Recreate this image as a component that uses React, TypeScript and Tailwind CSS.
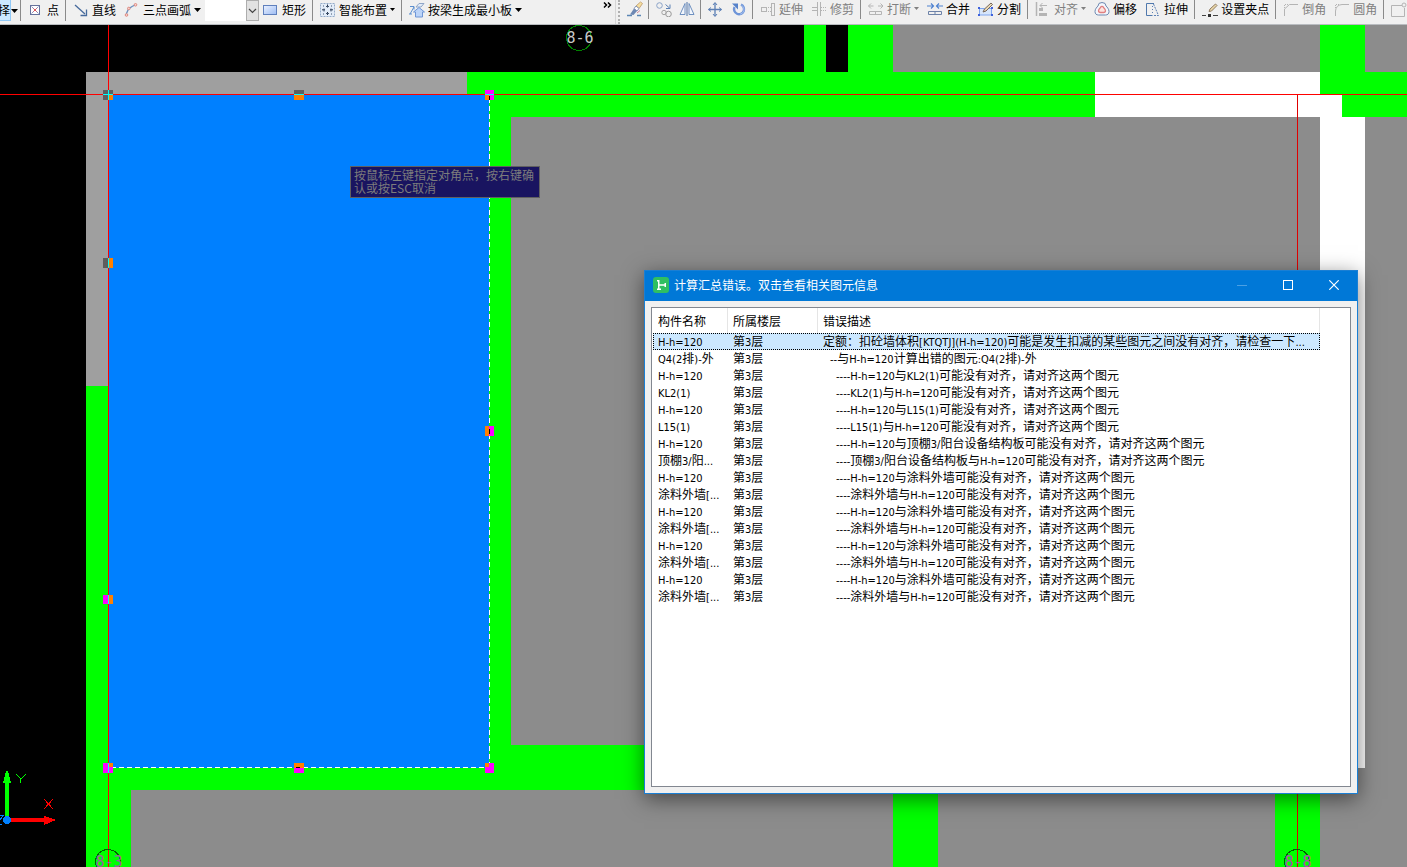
import React from "react";

const ROWS: [string, string, number][] = [
  ["H-h=120", "定额：扣砼墙体积[KTQTJ](H-h=120)可能是发生扣减的某些图元之间没有对齐，请检查一下...", 0],
  ["Q4(2排)-外", "--与H-h=120计算出错的图元:Q4(2排)-外", 1],
  ["H-h=120", "----H-h=120与KL2(1)可能没有对齐，请对齐这两个图元", 2],
  ["KL2(1)", "----KL2(1)与H-h=120可能没有对齐，请对齐这两个图元", 2],
  ["H-h=120", "----H-h=120与L15(1)可能没有对齐，请对齐这两个图元", 2],
  ["L15(1)", "----L15(1)与H-h=120可能没有对齐，请对齐这两个图元", 2],
  ["H-h=120", "----H-h=120与顶棚3/阳台设备结构板可能没有对齐，请对齐这两个图元", 2],
  ["顶棚3/阳...", "----顶棚3/阳台设备结构板与H-h=120可能没有对齐，请对齐这两个图元", 2],
  ["H-h=120", "----H-h=120与涂料外墙可能没有对齐，请对齐这两个图元", 2],
  ["涂料外墙[...", "----涂料外墙与H-h=120可能没有对齐，请对齐这两个图元", 2],
  ["H-h=120", "----H-h=120与涂料外墙可能没有对齐，请对齐这两个图元", 2],
  ["涂料外墙[...", "----涂料外墙与H-h=120可能没有对齐，请对齐这两个图元", 2],
  ["H-h=120", "----H-h=120与涂料外墙可能没有对齐，请对齐这两个图元", 2],
  ["涂料外墙[...", "----涂料外墙与H-h=120可能没有对齐，请对齐这两个图元", 2],
  ["H-h=120", "----H-h=120与涂料外墙可能没有对齐，请对齐这两个图元", 2],
  ["涂料外墙[...", "----涂料外墙与H-h=120可能没有对齐，请对齐这两个图元", 2],
];

const INDENT = ["pl-[5px]", "pl-[12px]", "pl-[18px]"];

/* Latin runs are set one size smaller than the Chinese text around them. */
function Mixed({ text }: { text: string }) {
  const parts = text.split(/([\x20-\x7e]+)/);
  return (
    <>
      {parts.map((p, i) =>
        i % 2 ? (
          <span key={i} className="font-['DejaVu_Sans_Condensed','Noto_Sans',sans-serif] text-[11px]">{p}</span>
        ) : (
          p
        ),
      )}
    </>
  );
}

function Icon({ children }: { children: React.ReactNode }) {
  return (
    <svg width="16" height="16" viewBox="0 0 16 16" fill="none" className="shrink-0" aria-hidden="true">
      {children}
    </svg>
  );
}

function Arrow({ wide }: { wide?: boolean }) {
  return wide ? (
    <svg width="7" height="4" viewBox="0 0 7 4" className="shrink-0" aria-hidden="true"><path d="M0 0h7L3.5 4z" fill="currentColor" /></svg>
  ) : (
    <svg width="5" height="3" viewBox="0 0 5 3" className="shrink-0" aria-hidden="true"><path d="M0 0h5L2.5 3z" fill="currentColor" /></svg>
  );
}

function Tool({ icon, label, arrow, disabled }: { icon: React.ReactNode; label: string; arrow?: "wide" | "small"; disabled?: boolean }) {
  return (
    <button type="button" disabled={disabled} className="flex h-full shrink-0 items-center gap-[3px] px-1 pb-[2px] whitespace-nowrap text-black disabled:text-[#808080]">
      <Icon>{icon}</Icon>
      <span>{label}</span>
      {arrow && <Arrow wide={arrow === "wide"} />}
    </button>
  );
}

function IconTool({ icon, title }: { icon: React.ReactNode; title: string }) {
  return (
    <button type="button" aria-label={title} className="flex h-full shrink-0 items-center pr-[3px] pb-[2px] pl-1">
      <Icon>{icon}</Icon>
    </button>
  );
}

function Sep() {
  return <span className="mr-[3px] ml-[2px] h-full w-px shrink-0 bg-[#8a8a8a]" />;
}

const B = "#5b7fb5";
const G = "#b4b4b4";

const icons = {
  point: (
    <>
      <rect x="2.5" y="3.5" width="9" height="9" stroke="#66729c" fill="#fff" />
      <path d="M3.500 4.500l7 7M10.500 4.500l-7 7" stroke="#8b93c4" />
      <path d="M5.500 6.500l3 3M8.500 6.500l-3 3" stroke="#e0555a" />
    </>
  ),
  line: (
    <>
      <path d="M2 3l10 9" stroke="#466a9c" strokeWidth="1.300" />
      <path d="M13.500 7.500v6h-6" stroke="#466a9c" strokeWidth="1.300" />
    </>
  ),
  arc: (
    <>
      <path d="M2.500 14V11.500L4.500 7L8 4.500L12 2.500" stroke="#6b90bf" strokeWidth="1.300" />
      <g stroke="#e08a80" fill="#f7d4cf"><circle cx="2.500" cy="13" r="1.300" /><circle cx="4.800" cy="6.500" r="1.300" /><circle cx="11.500" cy="2.800" r="1.300" /></g>
    </>
  ),
  rect: <rect x="0.500" y="3.500" width="13" height="9" fill="url(#rectFill)" stroke="#5f80bd" />,
  smart: (
    <>
      <rect x="0.500" y="1.500" width="14" height="13" stroke="#93abc9" fill="#e3edf9" strokeDasharray="2 1" />
      <path d="M7.500 2.500v3M7.500 10v3M2 7.800h3M10 7.800h3" stroke="#26364d" />
      <path d="M6 4.500h3M6 11.500h3M4 6.500v3M11 6.500v3M3 4h1M11 4h1M3 12h1M11 12h1" stroke="#40536e" />
    </>
  ),
  beam: (
    <>
      <path d="M7 5l3-3.500h5L12 5z" fill="#e3ecf8" stroke="#8fa6c8" />
      <path d="M1 4.500h4v3M0 12h3M5 5L1 12" stroke="#5b8fd0" />
      <path d="M4.500 10L10 5.500l5.500 4.500h-2v5h-7v-5z" fill="#bcd4f8" stroke="#6f96d6" />
    </>
  ),
  brush: (
    <>
      <path d="M0 14.500h5M10 14.500h4" stroke="#5b86b5" strokeWidth="1.300" />
      <path d="M9 5l4.500-4 2 1.500-3.500 5z" fill="#f5dfa0" stroke="#c8a77a" />
      <path d="M7 7.500L9 5l3 2.500-2 2.500z" fill="#fff" stroke="#8494b5" />
      <path d="M3 13.500l4-6 3 2.500L6.500 14z" fill="#6d87b3" />
      <path d="M10 12l3-2.500" stroke="#d0889a" />
    </>
  ),
  copy: (
    <>
      <circle cx="3.500" cy="4.500" r="2.800" stroke="#8aa3c8" />
      <circle cx="12.500" cy="13" r="2.800" stroke="#9b9b9b" />
      <circle cx="8" cy="11.500" r="2.200" stroke="#a4a4a4" />
      <path d="M9.500 3.500l4 3.500M14 3.500v4h-4" stroke="#5b80b4" />
    </>
  ),
  mirror: (
    <>
      <path d="M6 2.500v11H1zM10 2.500v11h5z" fill="#f2f6fc" stroke="#6e90c0" />
      <path d="M8 1v14" stroke="#4d73a8" />
    </>
  ),
  move: (
    <>
      <path d="M7 2v13M0.500 8.500h13" stroke={B} strokeWidth="1.300" />
      <path d="M5 4l2-2.500L9 4M5 13l2 2.500L9 13M3 6.500L0.500 8.500l2.500 2M11 6.500l2.500 2-2.500 2" stroke={B} />
    </>
  ),
  rotate: (
    <>
      <path d="M10 3.600a5 5 0 1 1-6.500 2.500" stroke="#6d94d8" strokeWidth="2.400" />
      <path d="M1 2.500h6v6z" fill="#5581ca" />
      <path d="M10.500 4.200a4.800 4.800 0 0 1-1.500 9" stroke="#a5c0ef" />
    </>
  ),
  extend: (
    <>
      <rect x="11.500" y="2.500" width="3" height="12" stroke={G} />
      <path d="M1 6.500h6M1 10.500h6M1.500 6.500v4M6.500 6.500v4" stroke={G} />
      <path d="M8 6.500h3M8 10.500h3" stroke={G} strokeDasharray="1 1" />
    </>
  ),
  trim: (
    <>
      <path d="M6.500 1v14M9.500 1v14M1 6.500h5M1 9.500h5" stroke={G} />
      <path d="M10 6.500h6M10 9.500h6" stroke={G} strokeDasharray="1 1" />
    </>
  ),
  breakI: (
    <>
      <path d="M0.500 5h5M10 5h5M3 2.500L.5 5L3 7.500M12.500 2.500L15 5l-2.500 2.500" stroke={G} />
      <path d="M1.500 10.500h12v3h-12zM7.500 10.500v3" stroke={G} />
    </>
  ),
  merge: (
    <>
      <path d="M0 5h6M10 5h6M4 2.500L6.500 5L4 7.500M12 2.500L9.500 5L12 7.500" stroke="#4f82d0" strokeWidth="1.200" />
      <path d="M1.500 10.500h13v3h-13zM8 10.500v3" stroke="#6d82a8" />
    </>
  ),
  split: (
    <>
      <path d="M1.500 7.500v6.500h12v-6.500z" fill="#d7e6fb" stroke="#7fa6ee" />
      <g fill="#3f62dc"><rect x="0" y="6" width="2" height="2" /><rect x="0" y="13" width="2" height="2" /><rect x="13" y="13" width="2" height="2" /><rect x="13" y="6" width="2" height="2" /></g>
      <path d="M5 11l1.500-3L13 2l1.500 1.500L8 10z" fill="#ead9b4" stroke="#75675c" />
    </>
  ),
  align: (
    <>
      <path d="M1.500 1v14" stroke={G} strokeWidth="1.500" />
      <rect x="4" y="7" width="4" height="3" fill={G} /><rect x="4" y="12" width="8" height="3" fill={G} />
      <path d="M5 4.500h7M7.500 2L5 4.500L7.500 7" stroke={G} />
    </>
  ),
  offset: (
    <>
      <path d="M4 5a4 3.500 0 0 1 8 0c1 1 3 3 3 5.500s-1.500 3.500-3.500 3.500h-7C2.500 14 1 13 1 10.500S3 6 4 5z" stroke="#6d88b0" fill="#f4f7fc" />
      <path d="M6.500 6.500a1.600 1.600 0 0 1 3 0c1 1 2 2 2 3.300s-1 1.700-2 1.700h-3c-1.200 0-2-.7-2-1.700s1-2.300 2-3.300z" stroke="#e08080" strokeWidth="1.300" fill="#fce4e0" />
    </>
  ),
  stretch: (
    <>
      <path d="M9 2.500H1.500v12h6" stroke="#4f78ad" />
      <path d="M8.500 3l5 11.500H8" stroke="#5b80b4" strokeDasharray="2 1" />
      <path d="M7.500 5v9" stroke="#5b80b4" strokeDasharray="1 2" />
    </>
  ),
  grip: (
    <>
      <path d="M0 14.500h4M11 14.500h5" stroke="#444" />
      <rect x="6" y="13" width="3" height="3" fill="#333" />
      <path d="M7 10.500l1-2.500 5.500-5 1.500 1.500-5.500 5.500z" fill="#ead8a8" stroke="#8f7a62" />
    </>
  ),
  chamfer: (
    <>
      <path d="M1.500 15V8L6.500 3.500H15" stroke={G} />
      <path d="M1.500 7V3.500H6" stroke={G} strokeDasharray="1 1" />
    </>
  ),
  fillet: (
    <>
      <path d="M1.500 15V10Q2 4 8 3.500h7" stroke={G} />
      <path d="M1.500 7V3.500H6" stroke={G} strokeDasharray="1 1" />
    </>
  ),
  box: (
    <>
      <path d="M11 4.500H.5v11h13V7" stroke={G} />
      <circle cx="13" cy="4" r="2" stroke={G} />
    </>
  ),
};

function Toolbar() {
  return (
    <header className="flex h-[25px] shrink-0 overflow-hidden border-b border-[#b9bcc0] bg-[#f0f0f0] text-[12px] leading-4">
      <svg width="0" height="0" className="absolute" aria-hidden="true">
        <defs>
          <linearGradient id="rectFill" x1="0" y1="0" x2="1" y2="1"><stop offset="0" stopColor="#eaf1ff" /><stop offset="1" stopColor="#9dbcf3" /></linearGradient>
        </defs>
      </svg>
      <div className="flex h-[21px] w-[615px] shrink-0 items-center">
        <button type="button" className="flex h-full shrink-0 items-center">
          <span className="flex h-full w-[11px] items-center justify-end overflow-hidden border-r border-b border-[#90c8f6] bg-[#cce8ff] pb-px">择</span>
          <Arrow wide />
        </button>
        <Sep />
        <Tool icon={icons.point} label="点" />
        <Sep />
        <Tool icon={icons.line} label="直线" />
        <Tool icon={icons.arc} label="三点画弧" arrow="wide" />
        <div className="relative h-full w-[54px] shrink-0">
          <select aria-label="画弧参数" className="h-full w-full appearance-none bg-white"><option></option></select>
          <span className="pointer-events-none absolute inset-y-0 right-0 flex w-[13px] items-center justify-center border border-[#adadad] bg-[#e1e1e1]">
            <svg width="9" height="6" viewBox="0 0 9 6" fill="none"><path d="M1 1l3.500 3.500L8 1" stroke="#444" strokeWidth="1.200" /></svg>
          </span>
        </div>
        <Tool icon={icons.rect} label="矩形" />
        <Sep />
        <Tool icon={icons.smart} label="智能布置" arrow="small" />
        <Sep />
        <Tool icon={icons.beam} label="按梁生成最小板" arrow="wide" />
        <button type="button" aria-label="更多" className="mr-[3px] ml-auto flex h-full items-start pt-[2px]">
          <svg width="9" height="6" viewBox="0 0 9 6" fill="none"><path d="M1 .5L3.500 3L1 5.500M5 .5L7.500 3L5 5.500" stroke="#000" strokeWidth="1.500" /></svg>
        </button>
      </div>
      <div className="flex min-w-0 flex-1 border-l border-[#d5d5d5]">
        <span className="mr-[3px] ml-[2px] w-[2px] shrink-0 border-l-2 border-dotted border-[#b0b0b0]" />
        <div className="flex h-[19px] min-w-0 flex-1 items-center overflow-hidden">
          <IconTool icon={icons.brush} title="格式刷" />
          <Sep />
          <IconTool icon={icons.copy} title="复制" />
          <IconTool icon={icons.mirror} title="镜像" />
          <Sep />
          <IconTool icon={icons.move} title="移动" />
          <IconTool icon={icons.rotate} title="旋转" />
          <Sep />
          <Tool icon={icons.extend} label="延伸" disabled />
          <Tool icon={icons.trim} label="修剪" disabled />
          <Sep />
          <Tool icon={icons.breakI} label="打断" arrow="small" disabled />
          <Tool icon={icons.merge} label="合并" />
          <Tool icon={icons.split} label="分割" />
          <Sep />
          <Tool icon={icons.align} label="对齐" arrow="small" disabled />
          <Tool icon={icons.offset} label="偏移" />
          <Tool icon={icons.stretch} label="拉伸" />
          <Sep />
          <Tool icon={icons.grip} label="设置夹点" />
          <Sep />
          <Tool icon={icons.chamfer} label="倒角" disabled />
          <Tool icon={icons.fillet} label="圆角" disabled />
          <Sep />
          <IconTool icon={icons.box} title="打断点" />
        </div>
      </div>
    </header>
  );
}

function R({ x1, y1, x2, y2, f }: { x1: number; y1: number; x2: number; y2: number; f: string }) {
  return <rect x={x1} y={y1} width={x2 - x1} height={y2 - y1} fill={f} />;
}

function AxisLabel({ cx, cy, text, fill, ring }: { cx: number; cy: number; text: string; fill: string; ring: string }) {
  return (
    <g>
      <circle cx={cx} cy={cy} r="12.500" fill="none" stroke={ring} />
      <text x={cx + 1} y={cy + 5} textAnchor="middle" fill={fill} fontSize="15" fontFamily="'DejaVu Sans Mono', monospace">{text}</text>
    </g>
  );
}

function Plan() {
  const green = "#00ff00";
  const gray = "#8c8c8c";
  const light = "#9f9f9f";
  const dark = "#5f5f5f";
  const orange = "#ff8000";
  const pink = "#ff00ff";
  return (
    <svg className="absolute inset-0 h-full w-full" shapeRendering="crispEdges" role="img" aria-label="楼层平面图">
      <g transform="translate(0 -25)">
        <rect x="86" y="72" width="100%" height="100%" fill={gray} />
        <rect x="893" y="25" width="100%" height="47" fill={gray} />
        <R x1={804} y1={25} x2={826} y2={72} f={green} />
        <R x1={848} y1={25} x2={893} y2={72} f={green} />
        <R x1={86} y1={72} x2={467} y2={95} f={light} />
        <R x1={86} y1={72} x2={108} y2={386} f={light} />
        <R x1={467} y1={72} x2={1095} y2={117} f={green} />
        <R x1={1095} y1={72} x2={1320} y2={117} f="#fff" />
        <R x1={1320} y1={95} x2={1365} y2={768} f="#fff" />
        <R x1={1320} y1={25} x2={1365} y2={94} f={green} />
        <rect x="1365" y="72" width="100%" height="45" fill={green} />
        <R x1={1342} y1={94} x2={1365} y2={117} f={green} />
        <R x1={489} y1={117} x2={511} y2={768} f={green} />
        <R x1={489} y1={745} x2={1320} y2={790} f={green} />
        <R x1={108} y1={768} x2={490} y2={790} f={green} />
        <rect x="86" y="386" width="22" height="100%" fill={green} />
        <rect x="108" y="768" width="23" height="100%" fill={green} />
        <rect x="893" y="790" width="45" height="100%" fill={green} />
        <rect x="1275" y="790" width="45" height="100%" fill={green} />
        <R x1={108} y1={95} x2={489} y2={768} f="#0080ff" />
        <path d="M489.500 98V768M111 767.500H489" stroke="#fff" strokeDasharray="5 3" />
        <rect x="0" y="94" width="100%" height="1" fill="#f00" />
        <rect x="108" y="25" width="1" height="100%" fill="#f00" />
        <rect x="1297" y="95" width="1" height="100%" fill="#e00000" />

        <R x1={103} y1={90} x2={113} y2={100} f={dark} /><R x1={109} y1={95} x2={113} y2={100} f={orange} />
        <path d="M103 94.500h10M108.500 90v10" stroke="#0ff" />
        <R x1={294} y1={90} x2={304} y2={94} f={dark} /><R x1={294} y1={95} x2={304} y2={100} f={orange} /><R x1={294} y1={94} x2={304} y2={95} f="#0ff" />
        <R x1={485} y1={90} x2={494} y2={100} f={pink} /><R x1={485} y1={95} x2={489} y2={100} f={orange} /><R x1={485} y1={94} x2={494} y2={95} f="#0ff" /><R x1={489} y1={96} x2={490} y2={100} f="#000" />
        <R x1={103} y1={258} x2={108} y2={268} f={dark} /><R x1={109} y1={258} x2={113} y2={268} f={orange} /><R x1={108} y1={258} x2={109} y2={268} f="#0ff" />
        <R x1={485} y1={426} x2={489} y2={436} f={orange} /><R x1={489} y1={426} x2={494} y2={436} f={pink} /><R x1={489} y1={429} x2={490} y2={434} f="#000" />
        <R x1={103} y1={595} x2={108} y2={604} f={pink} /><R x1={109} y1={595} x2={113} y2={604} f={orange} /><R x1={108} y1={595} x2={109} y2={604} f="#0ff" />
        <R x1={103} y1={763} x2={113} y2={773} f={pink} /><R x1={109} y1={763} x2={113} y2={767} f={orange} /><R x1={108} y1={763} x2={109} y2={773} f="#0ff" />
        <R x1={294} y1={763} x2={304} y2={768} f={orange} /><R x1={294} y1={768} x2={304} y2={773} f={pink} /><R x1={296} y1={767} x2={300} y2={768} f="#000" />
        <R x1={485} y1={763} x2={494} y2={773} f={pink} /><R x1={485} y1={763} x2={489} y2={767} f={orange} />

        <AxisLabel cx={579} cy={38} text="8-6" fill="#c8c8c8" ring="#008000" />
        <AxisLabel cx={108} cy={862} text="8-3" fill="#a05ca0" ring="#006400" />
        <AxisLabel cx={1297} cy={862} text="8-8" fill="#b04cb0" ring="#006400" />

        <path d="M5 818V783H3L6 771h2l3 12H9v35z" fill="#00ff00" />
        <path d="M10 818h34v-2l12 4-12 5v-3H10z" fill="#ff0000" />
        <path d="M16 774l5 5 5-5M20.500 779v4" stroke="#00ff00" fill="none" />
        <path d="M44 799l9 10M53 799l-9 10" stroke="#ff0000" />
        <path d="M0 815.500h3L0 820M0 824.500h2" stroke="#0080ff" fill="none" />
        <circle cx="7" cy="820" r="4" fill="#0080ff" />
      </g>
    </svg>
  );
}

function ErrorDialog() {
  return (
    <section role="dialog" aria-labelledby="dialog-title" className="absolute top-[245px] left-[644px] flex min-h-[524px] w-[714px] flex-col border border-[#1a7fd4] bg-[#f0f0f0] shadow-[0_5px_20px_rgba(0,0,0,0.5)]">
      <div className="flex h-[30px] shrink-0 items-center bg-[#0078d7] pb-[2px] pl-2 text-white">
        <svg width="16" height="16" viewBox="0 0 16 16" aria-hidden="true" className="shrink-0">
          <rect width="16" height="16" rx="3" fill="#2fbf62" />
          <path d="M4 3h2.500v4.200H11.500V6H13v4h-1.500V8.700H6.500V11.500H8V13H4v-1.500h1V4.500H4z" fill="#fff" />
        </svg>
        <h1 id="dialog-title" className="ml-[5px] text-[12px] leading-4">计算汇总错误。双击查看相关图元信息</h1>
        <div className="ml-auto flex h-full">
          <button type="button" aria-label="最小化" disabled className="flex w-[46px] items-center justify-center"><span className="h-px w-[10px] bg-[#4ba0e4]" /></button>
          <button type="button" aria-label="最大化" className="flex w-[46px] items-center justify-center"><span className="size-[10px] border border-white" /></button>
          <button type="button" aria-label="关闭" className="flex w-[46px] items-center justify-center">
            <svg width="10" height="10" viewBox="0 0 10 10" fill="none"><path d="M.3.3l9.400 9.400M9.700.3l-9.400 9.400" stroke="#fff" strokeWidth="1.200" /></svg>
          </button>
        </div>
      </div>
      <div className="m-[6px] flex-1 border border-[#828790] bg-white pl-px">
        <table className="w-[667px] table-fixed border-separate border-spacing-0 text-left text-[12px] text-black">
          <colgroup><col className="w-[75px]" /><col className="w-[90px]" /><col /></colgroup>
          <thead>
            <tr className="h-[25px]">
              <th className="border-r border-[#e5e5e5] p-0 pl-[5px] font-normal">构件名称</th>
              <th className="border-r border-[#e5e5e5] p-0 pl-[5px] font-normal">所属楼层</th>
              <th className="border-r border-[#e5e5e5] p-0 pl-[5px] font-normal">错误描述</th>
            </tr>
          </thead>
          <tbody className="leading-4">
            {ROWS.map(([name, desc, level], i) => (
              <tr key={i} className={i === 0 ? "h-[17px] bg-[#cce8ff] outline-1 -outline-offset-1 outline-black outline-dotted" : "h-[17px]"}>
                <td className="h-[17px] overflow-hidden p-0 pl-[5px] whitespace-nowrap"><div className="h-[17px]"><Mixed text={name} /></div></td>
                <td className="p-0 pl-[5px] whitespace-nowrap"><div className="h-[17px]"><Mixed text="第3层" /></div></td>
                <td className={`p-0 whitespace-nowrap ${INDENT[level]}`}><div className="h-[17px]"><Mixed text={desc} /></div></td>
              </tr>
            ))}
          </tbody>
        </table>
      </div>
    </section>
  );
}

export default function App() {
  return (
    <div className="flex h-screen flex-col overflow-hidden bg-black font-['Noto_Sans_CJK_SC',sans-serif]">
      <Toolbar />
      <main className="relative min-h-0 flex-1 overflow-hidden">
        <Plan />
        <p className="absolute top-[141px] left-[350px] w-[190px] border border-[#606060] bg-[#191460] pt-px pb-[3px] pl-[3px] text-[12px] leading-[13px] text-[#7c7c7c]">
          按鼠标左键指定对角点，按右键确认或按ESC取消
        </p>
        <ErrorDialog />
      </main>
    </div>
  );
}
